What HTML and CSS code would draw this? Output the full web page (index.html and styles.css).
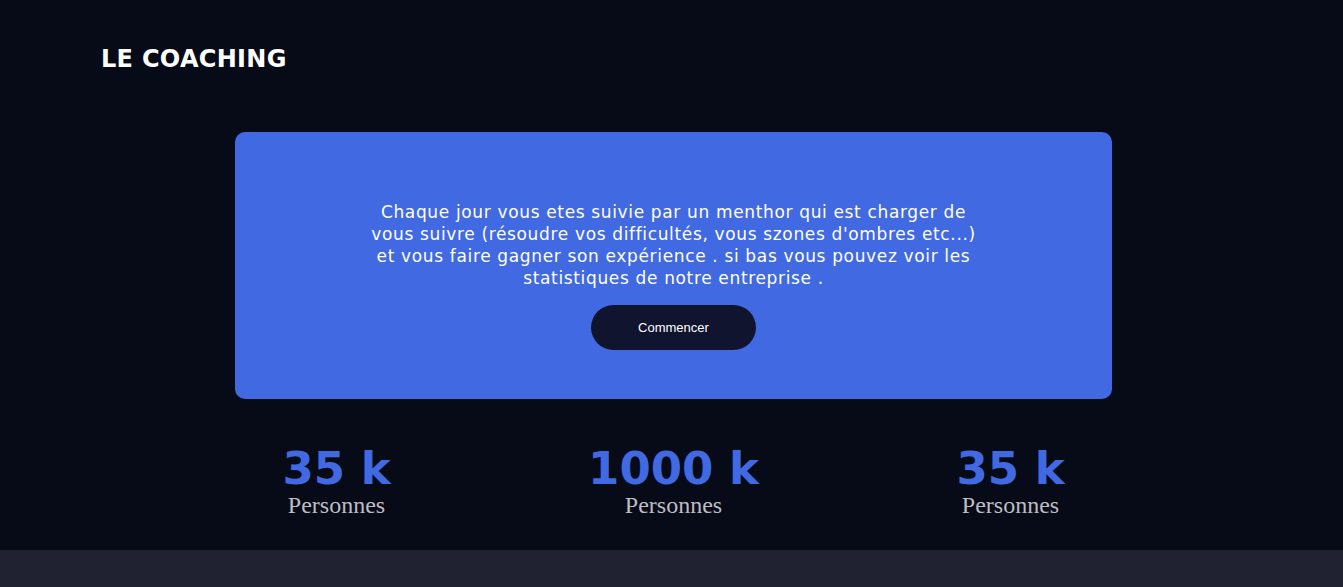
FILE: index.html
```html
<!DOCTYPE html>
<html lang="fr">
<head>
<meta charset="utf-8">
<title>Le Coaching</title>
<link rel="stylesheet" href="styles.css">
</head>
<body>
<header class="header">
  <h1 class="title">LE COACHING</h1>
</header>
<main class="main">
  <section class="card">
    <p class="card-text">Chaque jour vous etes suivie par un menthor qui est charger de vous suivre (résoudre vos difficultés, vous szones d'ombres etc...) et vous faire gagner son expérience . si bas vous pouvez voir les statistiques de notre entreprise .</p>
    <button class="btn">Commencer</button>
  </section>
  <section class="stats">
    <div class="stat"><div class="stat-num">35 k</div><div class="stat-label">Personnes</div></div>
    <div class="stat"><div class="stat-num">1000 k</div><div class="stat-label">Personnes</div></div>
    <div class="stat"><div class="stat-num">35 k</div><div class="stat-label">Personnes</div></div>
  </section>
</main>
<footer class="footer"></footer>
</body>
</html>
```
FILE: styles.css
```css
html, body {
  margin: 0;
  padding: 0;
}
body {
  background: #070b18;
  font-family: "DejaVu Sans", Verdana, sans-serif;
  color: #fff;
  overflow: hidden;
}
.header {
  padding: 45px 0 0 101px;
}
.title {
  margin: 0;
  font-size: 24px;
  line-height: 28px;
  font-weight: bold;
  letter-spacing: 0.3px;
  color: #fff;
}
.main {
  padding: 59px 0 34px 4px;
}
.card {
  width: 877px;
  margin: 0 auto;
  box-sizing: border-box;
  background: #4169e1;
  border-radius: 10px;
  padding: 69px 0 49px;
  display: flex;
  flex-direction: column;
  align-items: center;
}
.card-text {
  margin: 0;
  width: 620px;
  font-size: 17px;
  line-height: 22px;
  letter-spacing: 0.65px;
  text-align: center;
  color: #fff;
}
.btn {
  margin-top: 16px;
  width: 165px;
  height: 45px;
  border: none;
  border-radius: 23px;
  background: #11142f;
  color: #fff;
  font-family: "Liberation Sans", Arial, sans-serif;
  font-size: 13px;
  padding: 0;
}
.stats {
  width: 1011px;
  margin: 45px auto 0;
  display: grid;
  grid-template-columns: repeat(3, 1fr);
  text-align: center;
}
.stat-num {
  font-size: 45px;
  line-height: 50px;
  font-weight: bold;
  color: #4169e1;
}
.stat-label {
  font-family: "Liberation Serif", "Times New Roman", serif;
  font-size: 24px;
  line-height: 22px;
  color: #bdbdc2;
}
.footer {
  height: 40px;
  background: #202231;
}
```
